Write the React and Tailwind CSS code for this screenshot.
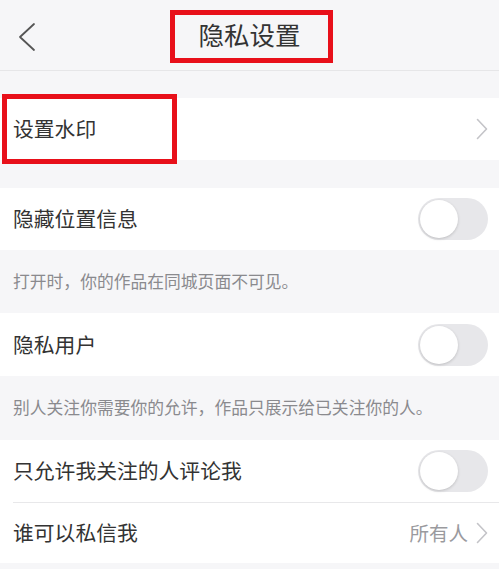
import React from "react";

const font = { fontFamily: '"Noto Sans CJK SC", "Noto Sans", sans-serif' };

function Chevron() {
  return (
    <svg width="12" height="22" viewBox="0 0 12 22" fill="none">
      <path d="M1.5 1.5 L10.5 11 L1.5 20.5" stroke="#c4c4c8" strokeWidth="1.6" strokeLinecap="round" strokeLinejoin="round" />
    </svg>
  );
}

function Toggle() {
  return (
    <div className="w-[70px] h-[42px] rounded-full bg-[#e7e7ea] p-[2px] flex items-center">
      <div className="w-[38px] h-[38px] rounded-full bg-white shadow-[0_1px_3px_rgba(0,0,0,0.18)]" />
    </div>
  );
}

function Row({ label, right, h = "h-[62px]" }) {
  return (
    <div className={`flex items-center justify-between bg-white pl-[13px] pr-[11px] ${h}`}>
      <span className="text-[20.8px] text-[#333]">{label}</span>
      {right}
    </div>
  );
}

function Note({ text, h }) {
  return (
    <div className={`flex items-center px-[13px] ${h}`}>
      <span className="text-[16.8px] text-[#8a8a8e]">{text}</span>
    </div>
  );
}

export default function App() {
  return (
    <div className="w-[499px] h-[569px] bg-[#f6f6f8] overflow-hidden" style={font}>
      <div className="relative h-[71px] border-b border-[#e6e6e8] flex items-center justify-center">
        <svg className="absolute left-[17px] top-[22px]" width="20" height="30" viewBox="0 0 20 30" fill="none">
          <path d="M17 2 L3 15 L17 28" stroke="#555" strokeWidth="1.8" strokeLinecap="round" strokeLinejoin="round" />
        </svg>
        <span className="text-[25.5px] text-[#333] -mt-[1px]">隐私设置</span>
        <div className="absolute left-[170px] top-[10px] w-[163px] h-[53px] border-[5px] border-[#e8101a]" />
      </div>

      <div className="h-[27px]" />
      <div className="relative">
        <Row label="设置水印" right={<Chevron />} />
        <div className="absolute left-[2px] -top-[4px] w-[175px] h-[70px] border-[5px] border-[#e8101a]" />
      </div>

      <div className="h-[28px]" />
      <Row label="隐藏位置信息" right={<Toggle />} />
      <Note text="打开时，你的作品在同城页面不可见。" h="h-[63px]" />
      <Row label="隐私用户" right={<Toggle />} h="h-[63px]" />
      <Note text="别人关注你需要你的允许，作品只展示给已关注你的人。" h="h-[64px]" />

      <div className="bg-white">
        <Row label="只允许我关注的人评论我" right={<Toggle />} />
        <div className="ml-[13px] h-px bg-[#e8e8ea]" />
        <Row
          label="谁可以私信我"
          h="h-[60px]"
          right={
            <div className="flex items-center gap-[8px]">
              <span className="text-[19.5px] text-[#9a9a9e]">所有人</span>
              <Chevron />
            </div>
          }
        />
      </div>
    </div>
  );
}
